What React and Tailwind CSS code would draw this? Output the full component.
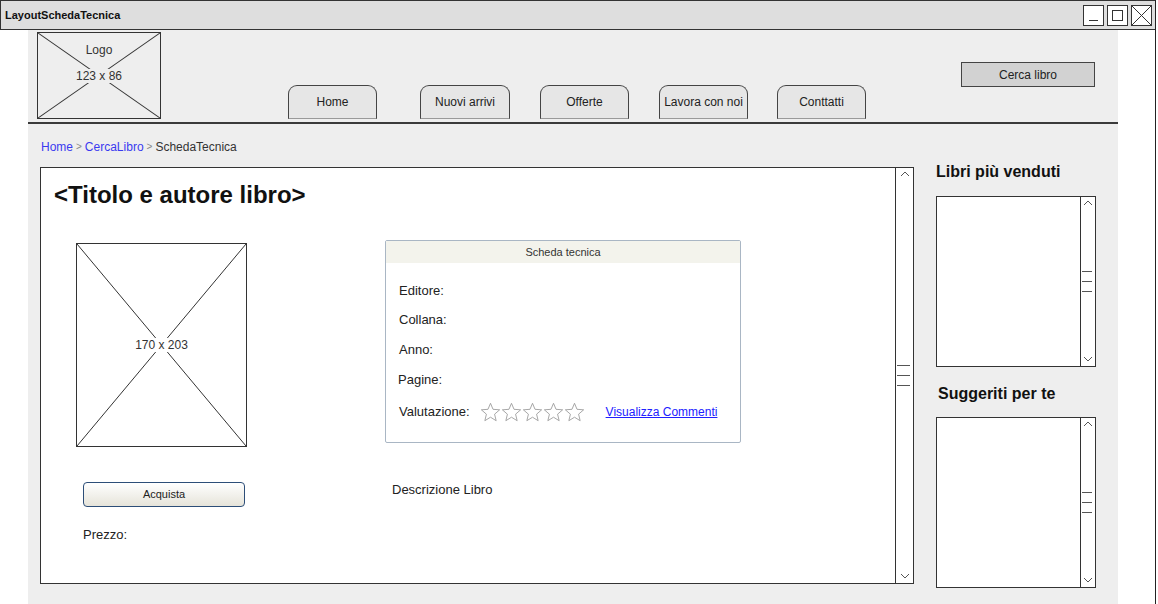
import React from "react";

function Chevron({ down }) {
  return (
    <svg width="10" height="6" viewBox="0 0 10 6" className="shrink-0">
      <path d={down ? "M1 1 L5 5 L9 1" : "M1 5 L5 1 L9 5"} stroke="#555" fill="none" strokeWidth="1" />
    </svg>
  );
}

function Scrollbar({ w = "w-[18px]" }) {
  return (
    <div className={`${w} shrink-0 border-l border-[#333] flex flex-col items-center justify-between pt-[3px] pb-[4px]`}>
      <Chevron />
      <div className="flex flex-col gap-[9px] w-full pl-px pr-[3px]">
        <div className="h-px bg-[#555]" />
        <div className="h-px bg-[#555]" />
        <div className="h-px bg-[#555]" />
      </div>
      <Chevron down />
    </div>
  );
}

function XLines() {
  return (
    <svg className="absolute inset-0 w-full h-full" preserveAspectRatio="none" viewBox="0 0 100 100">
      <line x1="0" y1="0" x2="100" y2="100" stroke="#333" strokeWidth="1" vectorEffect="non-scaling-stroke" />
      <line x1="100" y1="0" x2="0" y2="100" stroke="#333" strokeWidth="1" vectorEffect="non-scaling-stroke" />
    </svg>
  );
}

function Star() {
  return (
    <svg width="21" height="20" viewBox="0 0 24 23">
      <polygon
        points="12,1.5 14.9,8.4 22.5,9 16.7,14 18.5,21.5 12,17.5 5.5,21.5 7.3,14 1.5,9 9.1,8.4"
        fill="none"
        stroke="#999"
        strokeWidth="1"
      />
    </svg>
  );
}

function Tab({ label, w, ml }) {
  return (
    <div
      className={`${w} ${ml} h-[34px] self-end mb-[3px] rounded-t-[9px] border border-[#444] border-b-[#999] bg-[#e6e6e6] flex items-center justify-center text-[12px] text-[#222]`}
    >
      {label}
    </div>
  );
}

export default function App() {
  return (
    <div className="w-[1158px] h-[604px] bg-white overflow-hidden font-['Liberation_Sans',Arial,sans-serif]">
      <div className="w-[1156px] h-[604px] border-r border-[#222] flex flex-col">
        {/* title bar */}
        <div className="h-[30px] shrink-0 bg-[#dedede] border-t border-b border-l border-[#333] flex items-center pl-[4px] pr-[3px]">
          <span className="text-[11px] font-bold text-[#111]">LayoutSchedaTecnica</span>
          <div className="ml-auto flex gap-[3px]">
            <div className="w-[21px] h-[21px] border border-[#333] bg-white flex items-end justify-center pb-[4px]">
              <div className="w-[9px] h-px bg-[#333]" />
            </div>
            <div className="w-[21px] h-[21px] border border-[#333] bg-white flex items-center justify-center">
              <div className="w-[11px] h-[11px] border border-[#333]" />
            </div>
            <div className="w-[21px] h-[21px] border border-[#333] bg-white relative">
              <XLines />
            </div>
          </div>
        </div>

        {/* body */}
        <div className="flex flex-1 min-h-0">
          <div className="w-[28px] shrink-0 bg-white" />
          <div className="w-[1090px] shrink-0 bg-[#eeeeee] flex flex-col">
            {/* header */}
            <div className="h-[94px] shrink-0 border-b-2 border-[#3a3a3a] flex items-start">
              <div className="ml-[9px] mt-[2px] w-[124px] h-[87px] border-[1.5px] border-[#333] relative shrink-0 text-[12px] text-[#333]">
                <XLines />
                <div className="absolute top-[8px] left-0 right-0 flex justify-center">
                  <span className="px-1">Logo</span>
                </div>
                <div className="absolute inset-0 flex items-center justify-center">
                  <span className="bg-[#eeeeee] px-[2px] leading-[14px]">123 x 86</span>
                </div>
              </div>
              <Tab label="Home" w="w-[89px]" ml="ml-[127px]" />
              <Tab label="Nuovi arrivi" w="w-[90px]" ml="ml-[43px]" />
              <Tab label="Offerte" w="w-[89px]" ml="ml-[30px]" />
              <Tab label="Lavora con noi" w="w-[89px]" ml="ml-[30px]" />
              <Tab label="Conttatti" w="w-[89px]" ml="ml-[29px]" />
              <div className="ml-[95px] mt-[32px] w-[134px] h-[25px] bg-[#d2d2d2] border border-[#444] flex items-center justify-center text-[12px] text-[#222]">
                Cerca libro
              </div>
            </div>

            {/* breadcrumb */}
            <div className="mt-[15px] ml-[13px] h-[16px] flex items-center text-[12px] leading-[16px]">
              <span className="text-[#3a3af0]">Home</span>
              <span className="text-[#888] mx-[3px] text-[10px]">&gt;</span>
              <span className="text-[#3a3af0]">CercaLibro</span>
              <span className="text-[#888] mx-[3px] text-[10px]">&gt;</span>
              <span className="text-[#333]">SchedaTecnica</span>
            </div>

            {/* main row */}
            <div className="mt-[7px] flex items-start">
              {/* main panel */}
              <div className="ml-[12px] mt-[5px] w-[874px] h-[417px] bg-white border border-[#333] flex">
                <div className="flex-1 flex flex-col">
                  <div className="pt-[13px] pl-[13px] text-[24px] leading-[27px] font-bold text-[#111]">
                    &lt;Titolo e autore libro&gt;
                  </div>
                  <div className="flex items-start">
                    {/* left col */}
                    <div className="ml-[35px] flex flex-col">
                      <div className="mt-[35px] w-[171px] h-[204px] border border-[#333] relative">
                        <XLines />
                        <div className="absolute inset-0 flex items-center justify-center">
                          <span className="bg-white px-[2px] text-[12px] leading-[14px] text-[#333]">170 x 203</span>
                        </div>
                      </div>
                      <div className="ml-[7px] mt-[35px] w-[162px] h-[25px] rounded-[4px] border border-[#2d4e78] bg-gradient-to-b from-white to-[#e6e4da] flex items-center justify-center text-[11px] text-[#222]">
                        Acquista
                      </div>
                      <div className="ml-[7px] mt-[20px] text-[13px] leading-[16px] text-[#222]">Prezzo:</div>
                    </div>
                    {/* right col */}
                    <div className="ml-[138px] flex flex-col">
                      <div className="mt-[32px] w-[356px] h-[203px] border border-[#a9b6c4] rounded-[2px] bg-white flex flex-col">
                        <div className="h-[22px] bg-[#f3f3ec] flex items-center justify-center text-[11px] text-[#333]">
                          Scheda tecnica
                        </div>
                        <div className="pl-[13px] flex flex-col text-[13px] leading-[16px] text-[#222]">
                          <div className="mt-[20px]">Editore:</div>
                          <div className="mt-[13px]">Collana:</div>
                          <div className="mt-[14px]">Anno:</div>
                          <div className="mt-[14px] -ml-px">Pagine:</div>
                          <div className="mt-[16px] h-[16px] flex items-center">
                            <span>Valutazione:</span>
                            <div className="ml-[10px] flex">
                              <Star />
                              <Star />
                              <Star />
                              <Star />
                              <Star />
                            </div>
                            <span className="ml-[21px] text-[12px] text-[#2020ff] underline">Visualizza Commenti</span>
                          </div>
                        </div>
                      </div>
                      <div className="ml-[7px] mt-[39px] text-[13px] leading-[16px] text-[#222]">Descrizione Libro</div>
                    </div>
                  </div>
                </div>
                <Scrollbar />
              </div>

              {/* right column */}
              <div className="ml-[22px] flex flex-col">
                <div className="text-[16px] leading-[20px] font-bold text-[#111]">Libri più venduti</div>
                <div className="mt-[14px] w-[160px] h-[171px] bg-white border border-[#333] flex">
                  <div className="flex-1" />
                  <Scrollbar w="w-[15px]" />
                </div>
                <div className="mt-[17px] ml-[2px] text-[16px] leading-[20px] font-bold text-[#111]">Suggeriti per te</div>
                <div className="mt-[13px] w-[160px] h-[171px] bg-white border border-[#333] flex">
                  <div className="flex-1" />
                  <Scrollbar w="w-[15px]" />
                </div>
              </div>
            </div>
          </div>
          <div className="flex-1 bg-white" />
        </div>
      </div>
    </div>
  );
}
